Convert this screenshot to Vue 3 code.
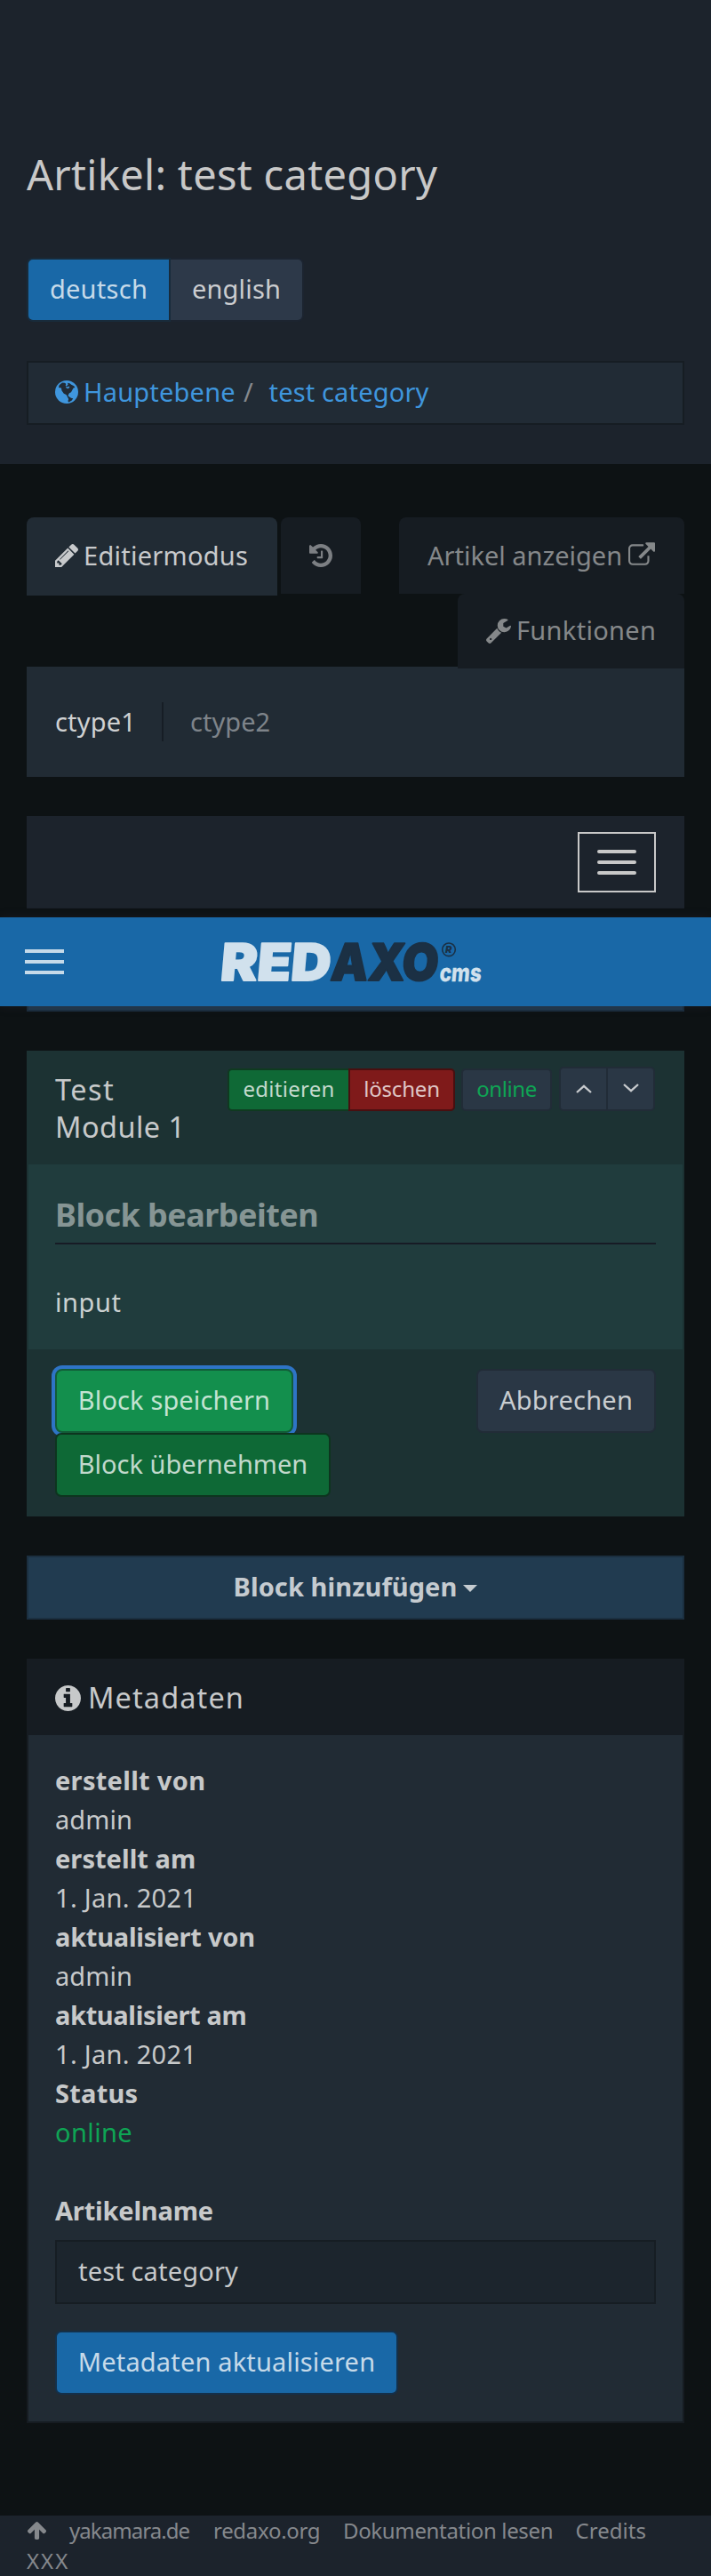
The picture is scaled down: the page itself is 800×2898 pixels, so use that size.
<script setup>
const meta = [
  { label: 'erstellt von', value: 'admin', l: 0.3, v: 0.07 },
  { label: 'erstellt am', value: '1. Jan. 2021', l: 0.05, v: 0.3 },
  { label: 'aktualisiert von', value: 'admin', l: -0.24, v: 0.07 },
  { label: 'aktualisiert am', value: '1. Jan. 2021', l: -0.36, v: 0.3 },
  { label: 'Status', value: 'online', l: 0.25, v: 0.4, online: true },
]
const links = [
  { text: 'yakamara.de', w: 162, s: -0.95 },
  { text: 'redaxo.org', w: 146, s: -0.3 },
  { text: 'Dokumentation lesen', w: 261.5, s: -0.34 },
  { text: 'Credits', w: 80, s: 0.04 },
]
</script>

<template>
  <div class="page">
    <nav class="topbar">
      <div class="burger"><i></i><i></i><i></i></div>
      <svg class="logo" width="300" height="60" viewBox="245 1052 300 60">
        <g font-family="Inter, sans-serif" font-weight="900">
          <g transform="translate(249 1103) skewX(-5)">
            <text class="lt" x="-2" y="0" font-size="57.5" stroke-width="1.8" textLength="124" lengthAdjust="spacingAndGlyphs">RED</text>
            <text class="dk" x="122" y="0" font-size="57.5" stroke-width="1.8" textLength="121" lengthAdjust="spacingAndGlyphs">AXO</text>
          </g>
          <g transform="translate(495 1103.5) skewX(-5)">
            <text class="lt" x="-1" y="0" font-size="27.5" font-weight="800" stroke-width=".3" textLength="47" lengthAdjust="spacingAndGlyphs">cms</text>
          </g>
          <text class="dk" x="501" y="1072" font-size="11" font-style="italic" stroke-width="0">R</text>
        </g>
        <circle cx="505" cy="1068.3" r="7.3" fill="none" stroke="#1b3044" stroke-width="1.6" />
      </svg>
    </nav>

    <header class="head">
      <h1>Artikel: test category</h1>
      <div class="langs">
        <span class="btn lang active">deutsch</span><span class="btn lang en">english</span>
      </div>
      <div class="crumb">
        <svg width="26" height="26" viewBox="0 0 26 26">
          <circle cx="13" cy="13" r="13" fill="#3f96dd" />
          <path fill="#212b35" d="M4.6 5.2 8 2.6l3 .2 1.4 1.2-.8 1.4 1.4 1 1.6-1.8-.6-1.8 2.4.4 1.8 1.6 3 1.4 1.2 1.8-1.8.4-1.4 2.6-1.2 2.2-2 1-1.4 2.6.8 1.6-1.6-.4-1.4-2-2.6-1.2-2.4-3.6-.4-2.8L4 8zM13.6 18l2.2.2 2.2 1.6 2.2.4-1.4 2.4-3.4 2-1-1.4.8-2.2z" />
          <path fill="#3f96dd" d="m12 6.6 2 1 1.6-1 .8 1.2-1.8 1.4-2-.8z" />
        </svg>
        <span class="c1">Hauptebene</span><span class="slash">/</span><span class="c2">test category</span>
      </div>
    </header>

    <main>
      <div class="tabs">
        <div class="tab on">
          <svg width="26" height="26" viewBox="128 149 1515 1515"><path d="M491 1536l91-91-235-235-91 91v107h128v128h107zm523-928q0-22-22-22-10 0-17 7l-542 542q-7 7-7 17 0 22 22 22 10 0 17-7l542-542q7-7 7-17zm-54-192l416 416-832 832h-416v-416zm683 96q0 53-37 90l-166 166-416-416 166-165q36-38 90-38 53 0 91 38l235 234q37 39 37 91z" /></svg>
          <span>Editiermodus</span>
        </div>
        <div class="tab hist">
          <svg width="26" height="26" viewBox="128 128 1536 1536"><path d="M1664 896q0 156-61 298t-164 245-245 164-298 61q-172 0-327-72.5t-264-204.5q-7-10-6.5-22.5t8.5-20.5l137-138q10-9 25-9 16 2 23 12 73 95 179 147t225 52q104 0 198.5-40.5t163.5-109.5 109.5-163.5 40.5-198.5-40.5-198.5-109.5-163.5-163.5-109.5-198.5-40.5q-98 0-188 35.5t-160 101.5l137 138q31 30 14 69-17 40-59 40h-448q-26 0-45-19t-19-45v-448q0-42 40-59 39-17 69 14l130 129q107-101 244.5-156.5t284.5-55.5q156 0 298 61t245 164 164 245 61 298zm-640-288v448q0 14-9 23t-23 9h-320q-14 0-23-9t-9-23v-64q0-14 9-23t23-9h224v-352q0-14 9-23t23-9h64q14 0 23 9t9 23z" /></svg>
        </div>
        <div class="right">
          <div class="tab show">
            <span>Artikel anzeigen</span>
            <svg width="30" height="26" viewBox="0 0 1792 1536"><path d="M1408 928v320q0 119-84.5 203.5t-203.5 84.5h-832q-119 0-203.5-84.5t-84.5-203.5v-832q0-119 84.5-203.5t203.5-84.5h704q14 0 23 9t9 23v64q0 14-9 23t-23 9h-704q-66 0-113 47t-47 113v832q0 66 47 113t113 47h832q66 0 113-47t47-113v-320q0-14 9-23t23-9h64q14 0 23 9t9 23zm384-864v512q0 26-19 45t-45 19-45-19l-176-176-652 652q-10 10-23 10t-23-10l-114-114q-10-10-10-23t10-23l652-652-176-176q-19-19-19-45t19-45 45-19h512q26 0 45 19t19 45z" /></svg>
          </div>
          <div class="tab func">
            <svg width="28" height="28" viewBox="85 128 1641 1643"><path d="M448 1472q0-26-19-45t-45-19-45 19-19 45 19 45 45 19 45-19 19-45zm644-420l-682 682q-37 37-90 37-52 0-91-37l-106-108q-38-36-38-90 0-53 38-91l681-681q39 98 114.5 173.5t173.5 114.5zm634-435q0 39-23 106-47 134-164.5 217.5t-258.5 83.5q-185 0-316.5-131.5t-131.5-316.5 131.5-316.5 316.5-131.5q58 0 121.5 16.5t107.5 46.5q16 11 16 28t-16 28l-293 169v224l193 107q5-3 79-48.5t135.5-81 70.5-35.5q15 0 23.5 10t8.5 25z" /></svg>
            <span>Funktionen</span>
          </div>
        </div>
      </div>
      <div class="ctypes"><span class="ct1">ctype1</span><span class="ct2">ctype2</span></div>

      <div class="subnav"><div class="toggle"><i></i><i></i><i></i></div></div>
      <div class="add"></div>

      <section class="module">
        <div class="mhead">
          <div class="mtitle"><span class="m1">Test</span><br /><span class="m2">Module 1</span></div>
          <div class="acts">
            <span class="sm edit">editieren</span><span class="sm del">löschen</span>
            <span class="sm onl">online</span>
            <span class="arrows">
              <span><svg width="18" height="10" viewBox="0 0 18 10"><path d="M1 9 9 1.8 17 9" /></svg></span>
              <span><svg width="18" height="10" viewBox="0 0 18 10"><path d="M1 1 9 8.2 17 1" /></svg></span>
            </span>
          </div>
        </div>
        <div class="mbody">
          <h2>Block bearbeiten</h2>
          <p>input</p>
        </div>
        <div class="mfoot">
          <div class="col">
            <span class="btn save">Block speichern</span>
            <span class="btn apply">Block übernehmen</span>
          </div>
          <span class="btn cancel">Abbrechen</span>
        </div>
      </section>

      <div class="add"><span>Block hinzufügen</span><b class="caret"></b></div>

      <section class="meta">
        <div class="meta-head">
          <svg width="29" height="29" viewBox="128 128 1536 1536"><path d="M1152 1376v-160q0-14-9-23t-23-9h-96v-512q0-14-9-23t-23-9h-320q-14 0-23 9t-9 23v160q0 14 9 23t23 9h96v320h-96q-14 0-23 9t-9 23v160q0 14 9 23t23 9h448q14 0 23-9t9-23zm-128-896v-160q0-14-9-23t-23-9h-192q-14 0-23 9t-9 23v160q0 14 9 23t23 9h192q14 0 23-9t9-23zm640 416q0 209-103 385.5t-279.5 279.5-385.5 103-385.5-103-279.5-279.5-103-385.5 103-385.5 279.5-279.5 385.5-103 385.5 103 279.5 279.5 103 385.5z" /></svg>
          <span>Metadaten</span>
        </div>
        <div class="meta-body">
          <dl>
            <template v-for="m in meta" :key="m.label">
              <dt :style="{ letterSpacing: m.l + 'px' }">{{ m.label }}</dt>
              <dd :class="{ green: m.online }" :style="{ letterSpacing: m.v + 'px' }">{{ m.value }}</dd>
            </template>
          </dl>
          <label>Artikelname</label>
          <div class="field">test category</div>
          <span class="btn update">Metadaten aktualisieren</span>
        </div>
      </section>
    </main>

    <footer>
      <div class="frow">
        <svg width="21" height="20" viewBox="117 192 1558 1472"><path d="M1675 971q0 51-37 90l-75 75q-38 38-91 38-54 0-90-38l-294-293v704q0 52-37.5 84.5t-90.5 32.5h-128q-53 0-90.5-32.5t-37.5-84.5v-704l-294 293q-36 38-90 38t-90-38l-75-75q-38-38-38-90 0-53 38-91l651-651q35-37 90-37 54 0 91 37l651 651q37 39 37 91z" /></svg>
        <span v-for="l in links" :key="l.text" :style="{ width: l.w + 'px', letterSpacing: l.s + 'px' }">{{ l.text }}</span>
      </div>
      <div class="xxx">XXX</div>
    </footer>
  </div>
</template>

<style>
body { background: #0d1214; }
</style>

<style scoped>
.page { position: relative; width: 800px; height: 2898px; overflow: hidden; background: #0d1214; color: #c7c9ca; font: 29px/44px "Noto Sans", sans-serif; box-sizing: border-box; }
.page * { box-sizing: border-box; }
span { white-space: nowrap; }
svg { flex: none; fill: currentColor; }

.topbar { position: absolute; left: 0; top: 1032px; width: 800px; height: 100px; background: #1968a7; box-shadow: 0 0 10px rgba(40, 36, 48, .45); display: flex; z-index: 2; }
.burger { margin: 36px 0 0 28px; width: 44px; height: 28px; display: flex; flex-direction: column; justify-content: space-between; }
.burger i { height: 4px; background: #c6dae9; }
.logo { margin: 20px 0 0 173px; overflow: visible; }
.lt { fill: #d1e1ed; stroke: #d1e1ed; stroke-linejoin: round; }
.dk { fill: #1b3044; stroke: #1b3044; stroke-linejoin: round; }

.head { height: 522px; padding: 164px 30px 0; background: #1c232c; }
h1 { margin: 0; font-size: 47px; line-height: 64px; font-weight: 400; letter-spacing: .31px; color: #c8c8c8; }
.langs { display: flex; margin-top: 62px; }
.btn { display: block; height: 72px; line-height: 66px; border: 2px solid; border-radius: 7px; text-align: center; }
.lang { width: 162px; border-color: #182b3b; background: #1968a7; color: #c6dae9; border-radius: 7px 0 0 7px; letter-spacing: .27px; }
.lang.en { width: 150px; border-color: #1c2430; border-left: 0; background: #2d3949; color: #cbcdd0; border-radius: 0 7px 7px 0; letter-spacing: .17px; }
.crumb { margin-top: 44px; height: 72px; border: 2px solid #161d23; background: #212b35; display: flex; align-items: center; padding-left: 30px; color: #3f96dd; line-height: 66px; }
.crumb svg { margin-top: -2px; }
.crumb span { margin-top: -2px; }
.crumb .c1 { margin-left: 6px; letter-spacing: .2px; width: 180px; }
.slash { color: #85898e; width: 28.5px; }
.c2 { letter-spacing: .16px; }

main { padding: 60px 30px 0; }
.tabs { display: flex; height: 168px; align-items: flex-start; }
.tab { height: 86px; border-radius: 8px 8px 0 0; background: #161c22; color: #85888a; display: flex; align-items: center; padding-left: 32px; }
.tab.on { width: 282px; height: 88px; background: #212b34; color: #c8cacc; letter-spacing: .26px; padding-bottom: 2px; }
.tab.on span { margin-left: 6px; }
.hist { width: 90px; margin-left: 4px; }
.hist svg { color: #7c7f83; }
.right { margin-left: auto; display: flex; flex-direction: column; align-items: flex-end; }
.show { width: 321px; letter-spacing: 0; padding-left: 32px; }
.show svg { margin: -5px 0 0 7px; }
.func { position: relative; z-index: 1; height: 84px; width: 255px; letter-spacing: .32px; }
.func span { margin: -2px 0 0 6px; }
.ctypes { height: 124px; background: #212b34; padding: 40px 32px; display: flex; }
.ct1 { width: 122px; height: 44px; border-right: 2px solid #161d25; letter-spacing: .2px; color: #cfd1d2; }
.ct2 { margin-left: 30px; letter-spacing: .05px; color: #7e848a; }
.subnav { margin-top: 44px; height: 104px; background: #1c232c; display: flex; justify-content: flex-end; padding: 18px 32px; }
.toggle { width: 88px; height: 68px; border: 2px solid #c8c8c8; padding: 18px 20px; display: flex; flex-direction: column; gap: 8px; }
.toggle i { height: 4px; border-radius: 2px; background: #c8c8c8; }
.add { margin-top: 44px; height: 72px; background: #213b50; border: 2px solid #1b2f40; display: flex; justify-content: center; align-items: center; font-weight: 700; letter-spacing: .08px; color: #c5cbd0; line-height: 42px; }
.add span { margin-top: -2px; }
.caret { border: 8px solid transparent; border-top-color: #c5cbd0; border-bottom: 0; margin: 2px 0 0 7px; }

.module { margin-top: 44px; border: 2px solid #1c3233; height: 524px; background: #1c3233; }
.mhead { height: 126px; padding: 0 30px; display: flex; justify-content: space-between; }
.mtitle { font-size: 32.5px; line-height: 42px; padding-top: 21px; }
.m1 { letter-spacing: 1.4px; }
.m2 { letter-spacing: .45px; }
.acts { display: flex; font-size: 24px; padding-top: 16px; margin-right: 1px; }
.sm { height: 48px; margin-top: 2px; line-height: 42px; border: 2px solid; border-radius: 5px; text-align: center; }
.edit { width: 136px; background: #0f6936; border-color: #0f3a20; border-right: 0; border-radius: 5px 0 0 5px; letter-spacing: .27px; color: #c3d9cd; }
.del { width: 120px; background: #7f1a1a; border-color: #480f10; border-radius: 0 5px 5px 0; letter-spacing: -.18px; color: #dfc6c6; }
.onl { width: 102px; margin-left: 7px; background: #2a3745; border-color: #212c37; color: #0ea554; letter-spacing: -.4px; }
.arrows { margin-left: 8px; display: flex; height: 50px; width: 108px; border: 2px solid #212c37; border-radius: 5px; background: #2a3745; }
.arrows span { flex: 1; display: flex; justify-content: center; padding-top: 18px; }
.arrows span + span { border-left: 2px solid #212c37; padding-top: 17px; }
.arrows path { fill: none; stroke: #c8cbce; stroke-width: 2.3; }
.mbody { height: 208px; background: #203c3d; padding: 33px 30px 0; }
h2 { margin: 0; height: 57px; border-bottom: 2px solid #171b25; font-size: 36px; line-height: 48px; letter-spacing: -.55px; color: #869594; }
p { margin: 43px 0 0; letter-spacing: .6px; color: #cbd1d1; }
.mfoot { padding: 22px 30px; display: flex; justify-content: space-between; }
.col { display: flex; flex-direction: column; }
.save { width: 268px; background: #138f4d; border-color: #125c38; color: #c3e3d2; letter-spacing: .12px; box-shadow: 0 0 0 4px #2e74c6; border-radius: 8px; }
.apply { position: relative; width: 310px; background: #0e6936; border-color: #0d351f; color: #c2d9cc; letter-spacing: 0; }
.cancel { width: 202px; background: #2a3745; border-color: #212c37; color: #c9cdd0; letter-spacing: .23px; }

.meta { margin-top: 44px; height: 860px; border: 2px solid #161c22; background: #212b34; }
.meta-head { height: 84px; background: #161c22; display: flex; align-items: center; padding: 0 30px 0; font-size: 32.5px; letter-spacing: 1.1px; }
.meta-head span { margin-left: 8px; }
.meta-body { padding: 29px 30px 0; }
dl, dd { margin: 0; }
dt, label { font-weight: 700; }
.green { color: #0ea554; }
label { display: block; margin-top: 44px; letter-spacing: -.2px; }
.field { margin-top: 11px; height: 72px; border: 2px solid #161d23; background: #1c252d; padding-left: 24px; line-height: 66px; letter-spacing: .16px; }
.update { margin-top: 30px; width: 386px; background: #1968a7; border-color: #14304a; color: #c6dae9; letter-spacing: .17px; }

footer { margin-top: 104px; height: 68px; padding: 0 30px; background: #1c232c; color: #85888c; font-size: 24px; line-height: 34px; }
.frow { display: flex; align-items: center; height: 34px; padding-left: 1px; }
.frow svg { margin-right: 26px; }
.xxx { letter-spacing: 2px; }
</style>
